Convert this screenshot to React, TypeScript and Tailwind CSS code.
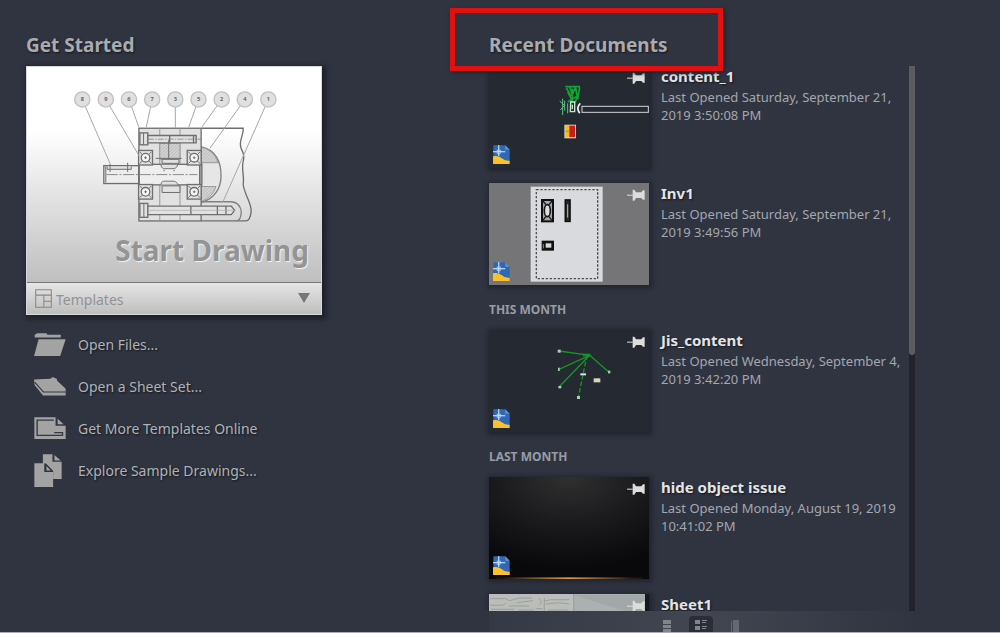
import type { ReactNode } from "react";

const balloons: { n: string; x: number; to: [number, number] }[] = [
  { n: "8", x: 200, to: [284, 415] },
  { n: "9", x: 271, to: [372, 392] },
  { n: "6", x: 341, to: [371, 306] },
  { n: "7", x: 411, to: [393, 306] },
  { n: "3", x: 481, to: [481, 308] },
  { n: "5", x: 551, to: [521, 306] },
  { n: "2", x: 621, to: [560, 306] },
  { n: "4", x: 691, to: [586, 368] },
  { n: "1", x: 762, to: [624, 532] },
];

function Bearing({ x, y }: { x: number; y: number }) {
  return (
    <g stroke="#6e6e6e" strokeWidth="4" fill="#e2e2e2">
      <rect x={x - 21} y={y - 22} width="42" height="44" />
      <path d={`M${x - 18} ${y - 18}l10 10M${x + 18} ${y - 18}l-10 10M${x - 18} ${y + 18}l10-10M${x + 18} ${y + 18}l-10-10`} strokeWidth="3" />
      <circle cx={x} cy={y} r="13" fill="#f5f5f5" />
      <path d={`M${x - 4} ${y}h8M${x} ${y - 4}v8`} strokeWidth="3" />
    </g>
  );
}

function MechanicalDrawing() {
  return (
    <svg viewBox="33 123 888 648" className="block w-full" aria-hidden="true">
      <defs>
        <pattern id="hatch" width="7" height="7" patternUnits="userSpaceOnUse" patternTransform="rotate(45)">
          <rect width="7" height="7" fill="#d2d2d2" />
          <path d="M0 0V7" stroke="#b0b0b0" strokeWidth="3" />
        </pattern>
      </defs>
      <g stroke="#a8a8a8" strokeWidth="3" fill="none">
        <path d="M560 308H686C688 328 672 345 679 366C684 382 692 385 686 408C680 432 690 452 686 478C690 510 712 535 710 560Q707 588 694 588H560" stroke="#6e6e6e" strokeWidth="4" />
        <path d="M560 364C602 372 620 410 619 452C619 486 602 520 560 532Z" fill="#e6e6e6" stroke="#808080" strokeWidth="4" />
        <path d="M560 366C583 370 600 384 610 412H560Z" fill="url(#hatch)" stroke="#999" />
        <path d="M560 484H604Q595 514 560 530Z" fill="url(#hatch)" stroke="#999" />
        <path d="M560 530H650C674 532 680 550 680 563Q679 585 666 588" stroke="#808080" strokeWidth="4" />
      </g>
      <g stroke="#6e6e6e" strokeWidth="4" fill="#e1e1e1">
        <rect x="371" y="308" width="188" height="280" />
        <path d="M434 308V420M495 308V420M434 478V588M495 478V588" stroke="#999" strokeWidth="3" />
        <rect x="434" y="354" width="61" height="48" fill="url(#hatch)" stroke="#999" strokeWidth="3" />
        <rect x="374" y="322" width="24" height="36" />
        <path d="M385 322v36" strokeWidth="3" />
        <path d="M398 330H544V352H398ZM464 330V352M536 330V352" />
        <path d="M398 341H558" strokeWidth="2" strokeDasharray="18 4 4 4" />
        <path d="M461 344V420M422 399H500" strokeWidth="3" />
        <rect x="265" y="421" width="106" height="54" fill="#ededed" />
        <path d="M271 424V472" strokeWidth="3" />
        <rect x="371" y="417" width="190" height="62" fill="#eeeeee" />
        <path d="M371 417V479M555 417V479" strokeWidth="5" />
        <path d="M438 418C438 432 448 430 461 430S486 432 488 418M438 478C438 466 448 468 461 468S486 466 488 478" strokeWidth="3" />
        <path d="M441 402H492V414H441ZM441 482H495V502H441ZM447 433V438M477 433V438" strokeWidth="3" />
        <path d="M275 424V432H348V424M284 416V440M337 412V440" strokeWidth="3" />
        <path d="M273 448H548" stroke="#8a8a8a" strokeWidth="3" strokeDasharray="34 5 6 5" />
        <rect x="374" y="535" width="24" height="42" />
        <path d="M386 535v42" strokeWidth="3" />
        <path d="M398 543H650L660 556L650 569H398ZM528 543V569M608 543V569M634 543V569" />
        <path d="M398 556H664" stroke="#aaa" strokeWidth="2" />
      </g>
      <Bearing x={391} y={397} />
      <Bearing x={538} y={397} />
      <Bearing x={391} y={500} />
      <Bearing x={538} y={500} />
      {balloons.map((b) => (
        <g key={b.n}>
          <path d={`M${b.x} 221L${b.to[0]} ${b.to[1]}`} stroke="#a6a6a6" strokeWidth="3" />
          <circle cx={b.x} cy="221" r="23" fill="#e0e0e0" stroke="#c0c0c0" strokeWidth="4" />
          <text x={b.x} y="227" textAnchor="middle" fontSize="17" fontWeight="700" fill="#666">
            {b.n}
          </text>
        </g>
      ))}
    </svg>
  );
}

function FolderIcon() {
  return (
    <svg viewBox="0 0 98 72" className="w-8" fill="#a3a3a3" aria-hidden="true">
      <path d="M2 14V6Q2 4 5 4L10 1H38L41 5H82V14Z" />
      <path d="M14 19H97L80 71H0Z" />
    </svg>
  );
}

function SheetSetIcon() {
  return (
    <svg viewBox="0 0 92 56" className="w-8" fill="#a3a3a3" aria-hidden="true">
      <path d="M0 7L47 5L54 0L66 6V10L91 34V53H26L2 24Z" />
      <path d="M2 15L27 43H91" fill="none" stroke="#343842" strokeWidth="3" />
    </svg>
  );
}

function TemplateIcon() {
  return (
    <svg viewBox="0 0 92 64" className="w-8" aria-hidden="true">
      <path d="M1 1H62V25H91V63H1Z" fill="#a3a3a3" />
      <path d="M57 9H9V53H82V45H58" fill="none" stroke="#343842" strokeWidth="4" />
      <path d="M68 5L85 21H68Z" fill="#a3a3a3" />
    </svg>
  );
}

function SamplesIcon() {
  return (
    <svg viewBox="0 0 82 98" className="w-7" aria-hidden="true">
      <path d="M26 1H54V23H81V73H56V50L35 28H26Z" fill="#a3a3a3" />
      <path d="M60 3L78 19H60Z" fill="#a3a3a3" />
      <path d="M1 27H30V53H56V97H1Z" fill="#a3a3a3" />
      <path d="M35 31L53 50H35Z" fill="#a3a3a3" stroke="#30343f" strokeWidth="3" />
    </svg>
  );
}

function Pin() {
  return (
    <svg viewBox="0 0 54 36" className="h-3 w-[18px]" fill="#dddddd" aria-hidden="true">
      <path d="M0 17H17V20H0Z" />
      <path d="M17 2H22L27 10H43L48 4H53V32H48L43 27H27L22 35H17Z" />
    </svg>
  );
}

function DwgBadge() {
  return (
    <svg viewBox="0 0 50 56" className="w-[17px]" aria-hidden="true">
      <path d="M1 1H36L49 14V55H1Z" fill="#2f68b4" />
      <path d="M36 1L49 14H36Z" fill="#5f90cc" />
      <path d="M0 33Q15 30 25 38Q36 48 49 46V56H0Z" fill="#fbc02d" />
      <path d="M17 0V32M0 20H36" stroke="#e4f1ff" strokeWidth="3" />
      <rect x="12" y="15" width="10" height="10" fill="none" stroke="#b8d8fa" strokeWidth="2" />
    </svg>
  );
}

function ContentPreview() {
  return (
    <svg viewBox="0 0 480 306" className="block w-full" aria-hidden="true">
      <rect width="480" height="306" fill="#242932" />
      <path d="M229 62H273M232 66L246 90M242 62L250 86L260 62M250 68V108M260 66L266 100L272 64M236 78L250 104M270 78L258 110M236 108L268 88" stroke="#12a333" strokeWidth="5" fill="none" />
      <path d="M221 98V147M212 105L226 118L214 132M227 104V134M236 112V142" stroke="#5bc784" strokeWidth="3" fill="none" />
      <path d="M245 108H257V137H244Z M250 116V130" stroke="#c6e8cf" strokeWidth="4" fill="none" />
      <path d="M274 112Q260 124 272 142" stroke="#f0f0f0" strokeWidth="5" fill="none" />
      <rect x="279" y="121" width="199" height="18" fill="none" stroke="#d4d6d8" strokeWidth="3" />
      <rect x="226" y="176" width="35" height="41" fill="#c9cdbb" />
      <rect x="230" y="179" width="12" height="34" fill="#f3bd21" />
      <rect x="241" y="179" width="17" height="34" fill="#c71e18" />
      <path d="M230 196H243" stroke="#d97e1b" strokeWidth="3" />
    </svg>
  );
}

function LayoutPreview() {
  return (
    <svg viewBox="0 0 480 306" className="block w-full" aria-hidden="true">
      <rect width="480" height="306" fill="#757577" />
      <rect x="125" y="11" width="216" height="285" fill="#d9dadd" />
      <rect x="142" y="20" width="184" height="267" fill="none" stroke="#4e4e50" strokeWidth="4" strokeDasharray="7 5" />
      <rect x="159" y="51" width="33" height="64" fill="#a5a6a9" stroke="#101010" strokeWidth="6" />
      <ellipse cx="175" cy="83" rx="9" ry="18" fill="#ddd" stroke="#181818" strokeWidth="5" />
      <path d="M162 54L171 65M189 54L180 65M162 112L170 101M189 112L180 101" stroke="#181818" strokeWidth="4" />
      <rect x="229" y="51" width="14" height="64" fill="#29292a" stroke="#101010" strokeWidth="5" />
      <path d="M236 64V104" stroke="#bbb" strokeWidth="3" />
      <rect x="158" y="173" width="37" height="30" fill="#111" />
      <rect x="170" y="181" width="17" height="13" fill="#d8d8d8" />
      <path d="M163 183V196" stroke="#888" strokeWidth="3" />
    </svg>
  );
}

function JisPreview() {
  return (
    <svg viewBox="0 0 480 306" className="block w-full" aria-hidden="true">
      <rect width="480" height="306" fill="#242932" />
      <g stroke="#149526" strokeWidth="4" fill="none">
        <path d="M210 63L302 76L210 118M302 76L210 171M302 76L360 127" />
        <path d="M294 76L268 202" strokeDasharray="14 6" />
        <path d="M282 75H304" strokeWidth="8" />
      </g>
      <g fill="#a3d2ad">
        <rect x="206" y="59" width="9" height="9" />
        <rect x="207" y="113" width="5" height="10" />
        <rect x="208" y="168" width="9" height="7" />
        <rect x="264" y="198" width="9" height="9" />
        <rect x="357" y="122" width="7" height="8" />
        <rect x="274" y="130" width="17" height="6" fill="#d6e2e7" />
      </g>
      <rect x="314" y="145" width="20" height="12" fill="#d9d6b8" />
    </svg>
  );
}

function DarkPreview() {
  return (
    <svg viewBox="0 0 480 306" className="block w-full" aria-hidden="true">
      <defs>
        <radialGradient id="spot" cx="0.5" cy="0" r="0.9">
          <stop offset="0" stopColor="#303031" />
          <stop offset="0.5" stopColor="#1b1b1d" />
          <stop offset="1" stopColor="#09090b" />
        </radialGradient>
        <linearGradient id="glow">
          <stop offset="0.05" stopColor="#1b1510" />
          <stop offset="0.5" stopColor="#d99a48" />
          <stop offset="0.95" stopColor="#1b1510" />
        </linearGradient>
      </defs>
      <rect width="480" height="306" fill="url(#spot)" />
      <rect x="20" y="301" width="440" height="5" fill="url(#glow)" />
    </svg>
  );
}

function SheetPreview() {
  return (
    <svg viewBox="0 0 480 306" className="block w-full" aria-hidden="true">
      <rect width="480" height="306" fill="#15181d" />
      <rect width="468" height="306" fill="#abb0b1" />
      <rect width="254" height="306" fill="#babdba" />
      <path d="M254 3L468 70V3Z" fill="#a2a8aa" />
      <g stroke="#8d928f" strokeWidth="2" fill="none">
        <path d="M4 14H50L62 20L90 12H128M4 34H40L50 28M60 36H120M6 46H76M88 48H134M84 26L132 20" />
        <path d="M148 14C160 16 157 28 150 34M140 44H160M166 21L185 17H240M170 30L210 26L240 30M176 48H238M254 0V60M166 12V50" />
      </g>
    </svg>
  );
}

interface Doc {
  name: string;
  opened: string;
  preview: ReactNode;
}

interface Group {
  label?: string;
  docs: Doc[];
}

const groups: Group[] = [
  {
    docs: [
      { name: "content_1", opened: "Last Opened Saturday, September 21, 2019 3:50:08 PM", preview: <ContentPreview /> },
      { name: "Inv1", opened: "Last Opened Saturday, September 21, 2019 3:49:56 PM", preview: <LayoutPreview /> },
    ],
  },
  {
    label: "THIS MONTH",
    docs: [{ name: "Jis_content", opened: "Last Opened Wednesday, September 4, 2019 3:42:20 PM", preview: <JisPreview /> }],
  },
  {
    label: "LAST MONTH",
    docs: [
      { name: "hide object issue", opened: "Last Opened Monday, August 19, 2019 10:41:02 PM", preview: <DarkPreview /> },
      { name: "Sheet1", opened: "", preview: <SheetPreview /> },
    ],
  },
];

const links: { label: string; icon: ReactNode }[] = [
  { label: "Open Files...", icon: <FolderIcon /> },
  { label: "Open a Sheet Set...", icon: <SheetSetIcon /> },
  { label: "Get More Templates Online", icon: <TemplateIcon /> },
  { label: "Explore Sample Drawings...", icon: <SamplesIcon /> },
];

function DocumentRow({ doc }: { doc: Doc }) {
  return (
    <li className="flex gap-3 pb-[15px]">
      <div className="relative w-40 shrink-0 self-start shadow-[1px_1px_4px_2px_rgba(20,22,30,0.5)]">
        {doc.preview}
        <button type="button" aria-label={`Pin ${doc.name}`} className="absolute top-1.5 right-1">
          <Pin />
        </button>
        <span className="absolute bottom-1 left-1">
          <DwgBadge />
        </span>
      </div>
      <div className="min-w-0 pt-[3px]">
        <a href="#" className="block text-[15px] leading-[14px] font-bold text-[#e4e4e6] [text-shadow:1px_1px_2px_#15171d]">
          {doc.name}
        </a>
        <p className="pt-[5px] text-[13px] leading-[18px] text-[#a4a7af]">{doc.opened}</p>
      </div>
    </li>
  );
}

const headingClass = "text-[19px] leading-7 font-bold text-[#a9abaf] [text-shadow:1px_1px_2px_#15171d]";

export default function App() {
  return (
    <div className="flex h-screen border-b border-[#a9adb5] bg-[#2f3440] font-['Noto_Sans','Open_Sans',sans-serif]">
      <main className="flex min-h-0 flex-1 justify-between pr-[85px] pl-[26px]">
        <section className="w-[296px] shrink-0 pt-[31px]">
          <h2 className={headingClass}>Get Started</h2>
          <div className="mt-[7px] border border-[#d8d8d8] shadow-[2px_2px_5px_2px_#1d2029]">
            <button type="button" className="relative block w-full bg-linear-to-b from-white from-30% to-[#bfbfbf]">
              <MechanicalDrawing />
              <span className="absolute right-3 bottom-3 text-[28px] leading-10 font-bold text-[#949494] [text-shadow:1px_1px_1px_#f4f4f4]">
                Start Drawing
              </span>
            </button>
            <div className="relative flex h-8 items-center border-t border-[#777] bg-linear-to-b from-[#e6e6e6] to-[#bebebe] px-2">
              <svg viewBox="0 0 50 56" className="w-[17px]" fill="none" stroke="#858585" strokeWidth="3" aria-hidden="true">
                <path d="M2 2H48V54H2ZM2 18H48M26 18V54M26 36H48" />
              </svg>
              <select aria-label="Templates" className="min-w-0 flex-1 appearance-none bg-transparent pt-1 pl-1 text-[14px] leading-5 text-[#929292] outline-none">
                <option>Templates</option>
              </select>
              <svg viewBox="0 0 12 10" className="pointer-events-none absolute right-[11px] w-3" aria-hidden="true">
                <path d="M0 0H12L6 10Z" fill="#777" />
              </svg>
            </div>
          </div>
          <nav className="mt-[9px]">
            {links.map((l) => (
              <a key={l.label} href="#" className="flex h-[42px] items-center text-[14px] text-[#b0b2b6] [text-shadow:1px_1px_2px_#15171d]">
                <span className="flex w-[52px] pl-2">{l.icon}</span>
                {l.label}
              </a>
            ))}
          </nav>
        </section>

        <section className="flex min-h-0 w-[426px] shrink-0 flex-col pt-[31px]">
          <div className="relative">
            <h2 className={headingClass}>Recent Documents</h2>
            <div className="pointer-events-none absolute -top-[23px] -left-[39px] z-10 h-[63px] w-[273px] border-[5px] border-[#e21111] shadow-[2px_2px_4px_#20232c]" />
          </div>
          <div className="mt-[7px] flex min-h-0 flex-1 justify-between">
            <div className="-ml-2 min-h-0 w-[423px] overflow-hidden pl-2">
              {groups.map((g, i) => (
                <div key={i}>
                  {g.label && <h3 className="mb-2.5 text-[12px] leading-5 font-bold text-[#999ca4]">{g.label}</h3>}
                  <ul>
                    {g.docs.map((d) => (
                      <DocumentRow key={d.name} doc={d} />
                    ))}
                  </ul>
                </div>
              ))}
            </div>
            <div className="w-1.5 bg-[#22222c]">
              <div className="h-[53%] rounded-b-sm bg-[#5b5b60]" />
            </div>
          </div>
          <div className="flex h-[21px] shrink-0 items-end gap-2.5 bg-linear-to-r from-[#343945] via-[#424651] via-50% to-[#2f3440] pl-[166px]">
            <button type="button" aria-label="Large icons" className="flex h-4 w-6 items-center justify-center">
              <svg viewBox="0 0 12 16" className="h-4 w-3" fill="#82858d" aria-hidden="true">
                <path d="M2 4H10V8H2ZM2 9H10V12H2ZM2 13H10V16H2Z" />
              </svg>
            </button>
            <button type="button" aria-label="List view" className="flex h-4 w-6 items-center justify-center rounded-t bg-[#2b2e38]">
              <svg viewBox="0 0 14 16" className="h-4 w-3.5" fill="#82858d" aria-hidden="true">
                <path d="M1 4H6V8H1ZM8 4H13V5H8ZM8 6H12V7H8ZM1 10H6V14H1ZM8 10H13V11H8ZM8 12H12V13H8Z" />
              </svg>
            </button>
            <button type="button" aria-label="Details view" className="flex h-4 w-6 items-center justify-center">
              <svg viewBox="0 0 12 16" className="h-4 w-3" fill="#646872" aria-hidden="true">
                <path d="M2 5H3V16H2ZM4 4H10V16H4Z" />
              </svg>
            </button>
          </div>
        </section>
      </main>
    </div>
  );
}
